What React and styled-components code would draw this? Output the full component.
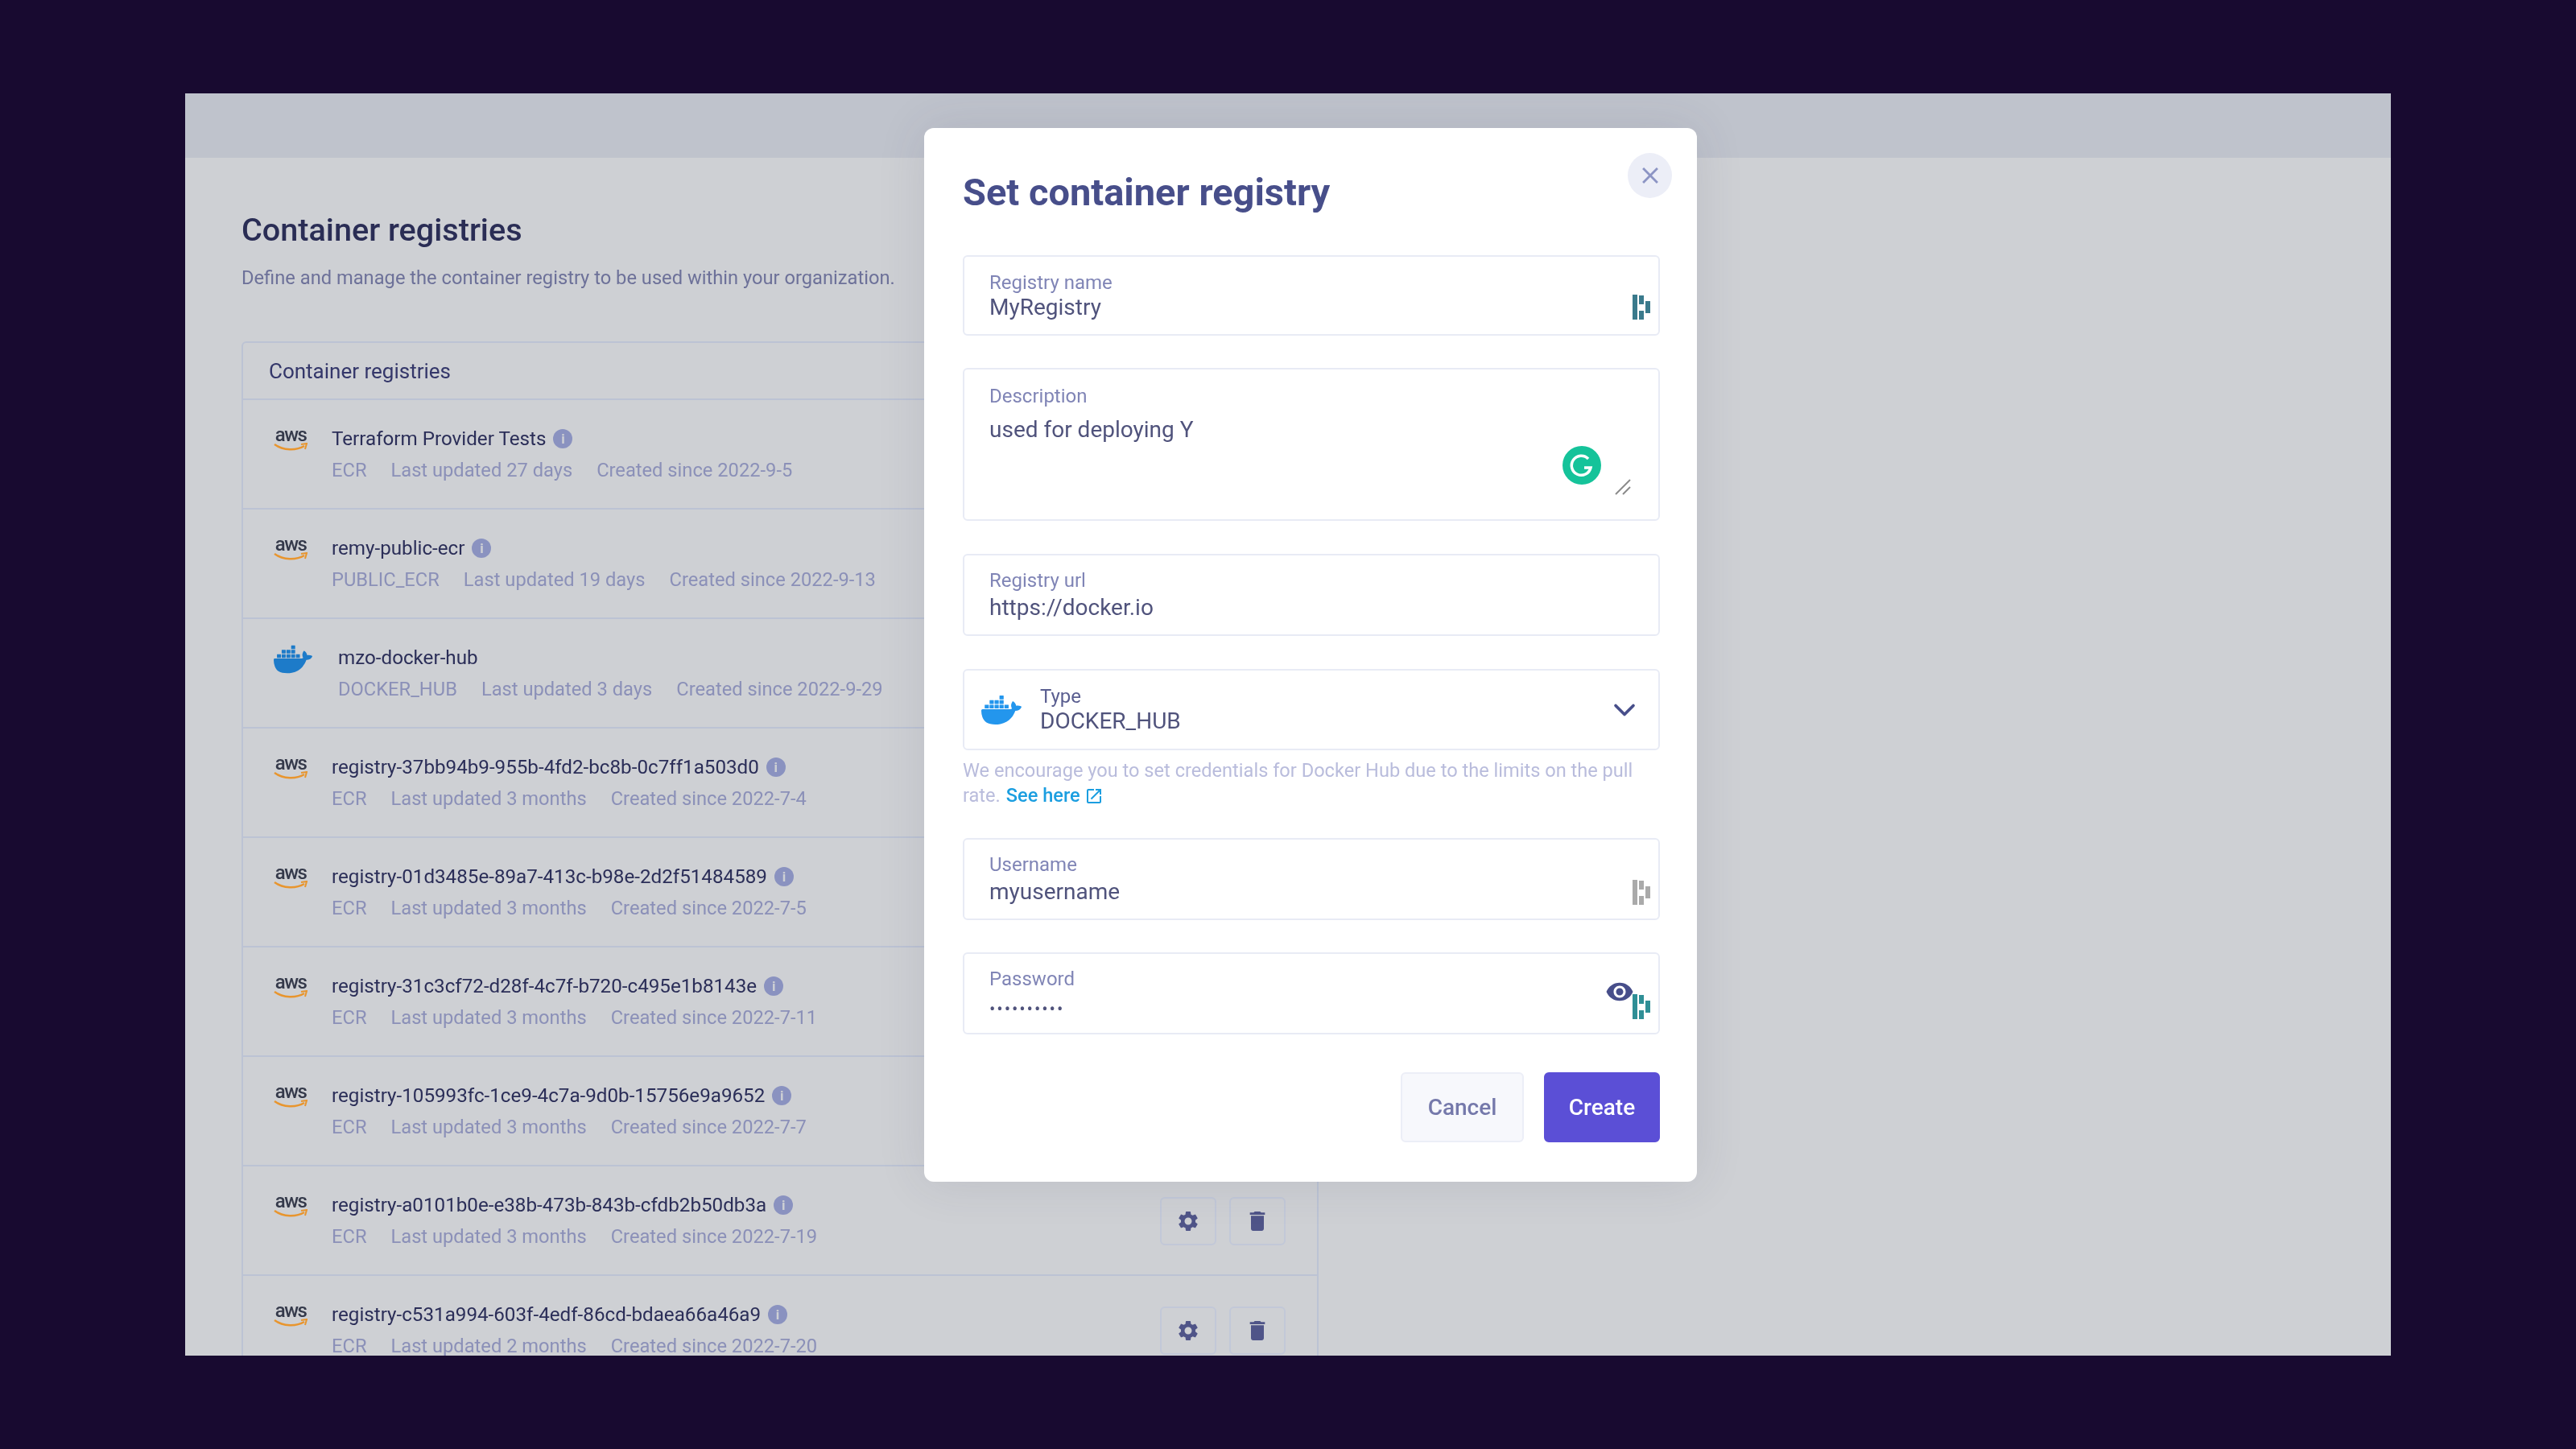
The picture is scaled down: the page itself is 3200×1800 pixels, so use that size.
import React from 'react'
import styled, { createGlobalStyle } from 'styled-components'
import { SiDocker } from 'react-icons/si'
import { MdSettings, MdDelete, MdVisibility, MdClose, MdOpenInNew } from 'react-icons/md'
import { ChevronDown } from 'lucide-react'

const GlobalStyle = createGlobalStyle`
  html, body {
    margin: 0;
    background: #180a30;
    font-family: Roboto, "Liberation Sans", sans-serif;
  }
  * { box-sizing: border-box; }
`

const Screen = styled.div`
  position: relative;
  width: 2740px;
  height: 1568px;
  margin: 116px 230px;
  background: #ced0d4;
  overflow: hidden;
  filter: blur(0.7px);
`

const TopBar = styled.div`
  height: 80px;
  background: #bfc3cc;
`

const Content = styled.div`
  padding: 66px 70px 0;
`

const PageTitle = styled.h1`
  margin: 0;
  font-size: 39.6px;
  line-height: 48px;
  font-weight: 500;
  color: #2a2d55;
`

const PageDesc = styled.p`
  margin: 20px 0 0;
  font-size: 23.7px;
  line-height: 30px;
  color: #6d7199;
`

const Card = styled.div`
  width: 1338px;
  margin-top: 64px;
  border: 2px solid #bcc3d4;
  border-bottom: 0;
  border-radius: 6px 6px 0 0;
`

const CardHead = styled.div`
  height: 71px;
  padding-left: 32px;
  display: flex;
  align-items: center;
  font-size: 26px;
  color: #34376a;
  border-bottom: 2px solid #bcc3d4;
`

const Row = styled.div`
  height: 136px;
  padding: 33px 39px 0 38px;
  display: flex;
  align-items: flex-start;
  border-bottom: 2px solid #bcc3d4;
`

const LogoCell = styled.div`
  width: ${props => props.wide ? '80px' : '72px'};
  margin-top: ${props => props.wide ? '-7px' : '0'};
  flex-shrink: 0;
`

const AwsWord = styled.div`
  font-size: 24px;
  line-height: 20px;
  font-weight: 500;
  letter-spacing: -1.6px;
  color: #34394a;
  text-align: center;
  width: 42px;
`

const RowBody = styled.div`
  flex: 1;
  min-width: 0;
`

const NameLine = styled.div`
  display: flex;
  align-items: center;
  gap: 9px;
  height: 30px;
  font-size: 24.2px;
  color: #2b2e58;
`

const InfoDot = styled.span`
  width: 24px;
  height: 24px;
  border-radius: 50%;
  background: #8a92c0;
  color: #ced0d4;
  font-size: 17px;
  font-weight: 700;
  line-height: 24px;
  text-align: center;
`

const MetaLine = styled.div`
  display: flex;
  gap: 30px;
  margin-top: 9px;
  font-size: 23.7px;
  line-height: 30px;
  color: #8b90b8;
`

const RowActions = styled.div`
  display: flex;
  gap: 16px;
  margin-top: 5px;
`

const IconButton = styled.div`
  width: 70px;
  height: 60px;
  display: flex;
  align-items: center;
  justify-content: center;
  border: 2px solid #c2c8d8;
  border-radius: 6px;
  color: #4f5488;
`

const Modal = styled.div`
  position: absolute;
  left: 918px;
  top: 43px;
  width: 960px;
  height: 1309px;
  padding: 0 46px 0 48px;
  background: #fff;
  border-radius: 12px;
  box-shadow: 0 0 60px rgba(60, 60, 90, 0.12);
`

const CloseButton = styled.div`
  position: absolute;
  right: 31px;
  top: 31px;
  width: 55px;
  height: 56px;
  border-radius: 50%;
  background: #eceef7;
  color: #8c94c4;
  display: flex;
  align-items: center;
  justify-content: center;
`

const ModalTitle = styled.h2`
  margin: 0;
  padding-top: 50px;
  height: 158px;
  font-size: 47px;
  line-height: 60px;
  font-weight: 700;
  color: #474e8a;
`

const Field = styled.div`
  position: relative;
  height: ${props => props.h || 102}px;
  margin-bottom: ${props => props.after ?? 40}px;
  padding: ${props => props.pad || 16}px 31px 0;
  border: 2px solid #e8ebf5;
  border-radius: 6px;
`

const Label = styled.div`
  font-size: 24px;
  line-height: 30px;
  color: ${props => props.dark ? '#5a5e90' : '#8085b6'};
`

const Value = styled.div`
  margin-top: ${props => props.gap ?? 2}px;
  font-size: 28px;
  line-height: 34px;
  color: #50537c;
`

const Dots = styled.div`
  margin-top: 9px;
  font-size: 22px;
  line-height: 28px;
  letter-spacing: 1.9px;
  color: #50537c;
`

const Trailing = styled.div`
  position: absolute;
  right: 9px;
  bottom: ${props => props.low || 16}px;
  display: flex;
`

const EyeSpot = styled.div`
  position: absolute;
  right: 30px;
  top: 29px;
  color: #474e8a;
  display: flex;
`

const GrammarlySpot = styled.div`
  position: absolute;
  right: 71px;
  top: 95px;
  display: flex;
`

const GripSpot = styled.div`
  position: absolute;
  right: 34px;
  bottom: 30px;
  display: flex;
`

const SelectField = styled(Field)`
  display: flex;
  align-items: center;
  padding: 0 20px 0 21px;
`

const SelectText = styled.div`
  flex: 1;
  margin-left: 23px;
`

const Help = styled.p`
  margin: 10px 0 37px;
  width: 860px;
  font-size: 23.6px;
  line-height: 31px;
  color: #b9bcdc;
`

const HelpLink = styled.span`
  color: #1b9ee0;
  margin-left: 7px;
  font-weight: 500;
  display: inline-flex;
  align-items: center;
  gap: 5px;
`

const Footer = styled.div`
  display: flex;
  justify-content: flex-end;
  gap: 25px;
  margin-top: 47px;
`

const Button = styled.div`
  height: 87px;
  display: flex;
  align-items: center;
  justify-content: center;
  font-size: 28px;
  font-weight: 500;
  border-radius: 6px;
  width: ${props => props.primary ? '144px' : '153px'};
  background: ${props => props.primary ? '#5b4fd6' : '#f7f8fc'};
  color: ${props => props.primary ? '#fff' : '#7579ab'};
  border: 2px solid ${props => props.primary ? '#5b4fd6' : '#eceef7'};
`

const AwsLogo = () => (
  <div>
    <AwsWord>aws</AwsWord>
    <svg width="42" height="12" viewBox="0 0 42 12" style={{ display: 'block' }}>
      <path d="M1 2 C12 10 28 10 38 4" fill="none" stroke="#e8952e" strokeWidth="2.4" />
      <path d="M34 2 L41 1 L39 8" fill="none" stroke="#e8952e" strokeWidth="2" />
    </svg>
  </div>
)

const VaultMark = ({ color }) => (
  <svg width="24" height="32" viewBox="0 0 24 32" fill={color}>
    <rect x="1" y="0" width="6" height="31" />
    <rect x="9" y="1" width="6" height="11" />
    <rect x="9" y="20" width="6" height="11" />
    <rect x="17" y="8" width="6" height="15" />
  </svg>
)

const GrammarlyMark = () => (
  <svg width="48" height="48" viewBox="0 0 48 48">
    <circle cx="24" cy="24" r="24" fill="#15c39a" />
    <path d="M32 16 A12 12 0 1 0 35 27 L27 27" fill="none" stroke="#fff" strokeWidth="3.5" />
  </svg>
)

const ResizeGrip = () => (
  <svg width="20" height="20" viewBox="0 0 20 20" stroke="#8a8a8a" strokeWidth="2">
    <path d="M1 19 L19 1" />
    <path d="M10 19 L19 10" />
  </svg>
)

const registries = [
  { name: 'Terraform Provider Tests', type: 'ECR', updated: '27 days', created: '2022-9-5' },
  { name: 'remy-public-ecr', type: 'PUBLIC_ECR', updated: '19 days', created: '2022-9-13' },
  { name: 'mzo-docker-hub', type: 'DOCKER_HUB', updated: '3 days', created: '2022-9-29', docker: true },
  { name: 'registry-37bb94b9-955b-4fd2-bc8b-0c7ff1a503d0', type: 'ECR', updated: '3 months', created: '2022-7-4' },
  { name: 'registry-01d3485e-89a7-413c-b98e-2d2f51484589', type: 'ECR', updated: '3 months', created: '2022-7-5' },
  { name: 'registry-31c3cf72-d28f-4c7f-b720-c495e1b8143e', type: 'ECR', updated: '3 months', created: '2022-7-11' },
  { name: 'registry-105993fc-1ce9-4c7a-9d0b-15756e9a9652', type: 'ECR', updated: '3 months', created: '2022-7-7' },
  { name: 'registry-a0101b0e-e38b-473b-843b-cfdb2b50db3a', type: 'ECR', updated: '3 months', created: '2022-7-19' },
  { name: 'registry-c531a994-603f-4edf-86cd-bdaea66a46a9', type: 'ECR', updated: '2 months', created: '2022-7-20' },
]

const App = () => (
  <>
    <GlobalStyle />
    <Screen>
      <TopBar />
      <Content>
        <PageTitle>Container registries</PageTitle>
        <PageDesc>Define and manage the container registry to be used within your organization.</PageDesc>
        <Card>
          <CardHead>Container registries</CardHead>
          {registries.map(r => (
            <Row key={r.name}>
              <LogoCell wide={r.docker}>
                {r.docker ? <SiDocker size={48} color="#1d7bc9" /> : <AwsLogo />}
              </LogoCell>
              <RowBody>
                <NameLine>
                  {r.name}
                  {!r.docker && <InfoDot>i</InfoDot>}
                </NameLine>
                <MetaLine>
                  <span>{r.type}</span>
                  <span>Last updated {r.updated}</span>
                  <span>Created since {r.created}</span>
                </MetaLine>
              </RowBody>
              <RowActions>
                <IconButton><MdSettings size={30} /></IconButton>
                <IconButton><MdDelete size={32} /></IconButton>
              </RowActions>
            </Row>
          ))}
        </Card>
      </Content>

      <Modal>
        <CloseButton><MdClose size={34} /></CloseButton>
        <ModalTitle>Set container registry</ModalTitle>

        <Field h={100} pad={17} after={40}>
          <Label>Registry name</Label>
          <Value gap={-1}>MyRegistry</Value>
          <Trailing low={17}><VaultMark color="#3a7a8c" /></Trailing>
        </Field>

        <Field h={190} pad={18} after={41}>
          <Label>Description</Label>
          <Value gap={10}>used for deploying Y</Value>
          <GrammarlySpot><GrammarlyMark /></GrammarlySpot>
          <GripSpot><ResizeGrip /></GripSpot>
        </Field>

        <Field after={41}>
          <Label>Registry url</Label>
          <Value>https://docker.io</Value>
        </Field>

        <SelectField after={0} h={101}>
          <SiDocker size={50} color="#2396ed" />
          <SelectText>
            <Label dark>Type</Label>
            <Value gap={-1}>DOCKER_HUB</Value>
          </SelectText>
          <ChevronDown size={44} strokeWidth={2} color="#474e8a" />
        </SelectField>
        <Help>
          We encourage you to set credentials for Docker Hub due to the limits on the pull rate.
          <HelpLink>See here <MdOpenInNew size={24} /></HelpLink>
        </Help>

        <Field>
          <Label>Username</Label>
          <Value>myusername</Value>
          <Trailing><VaultMark color="#aaaaaa" /></Trailing>
        </Field>

        <Field after={0}>
          <Label>Password</Label>
          <Dots>••••••••••</Dots>
          <EyeSpot><MdVisibility size={36} /></EyeSpot>
          <Trailing><VaultMark color="#2f8f96" /></Trailing>
        </Field>

        <Footer>
          <Button>Cancel</Button>
          <Button primary>Create</Button>
        </Footer>
      </Modal>
    </Screen>
  </>
)

export default App
